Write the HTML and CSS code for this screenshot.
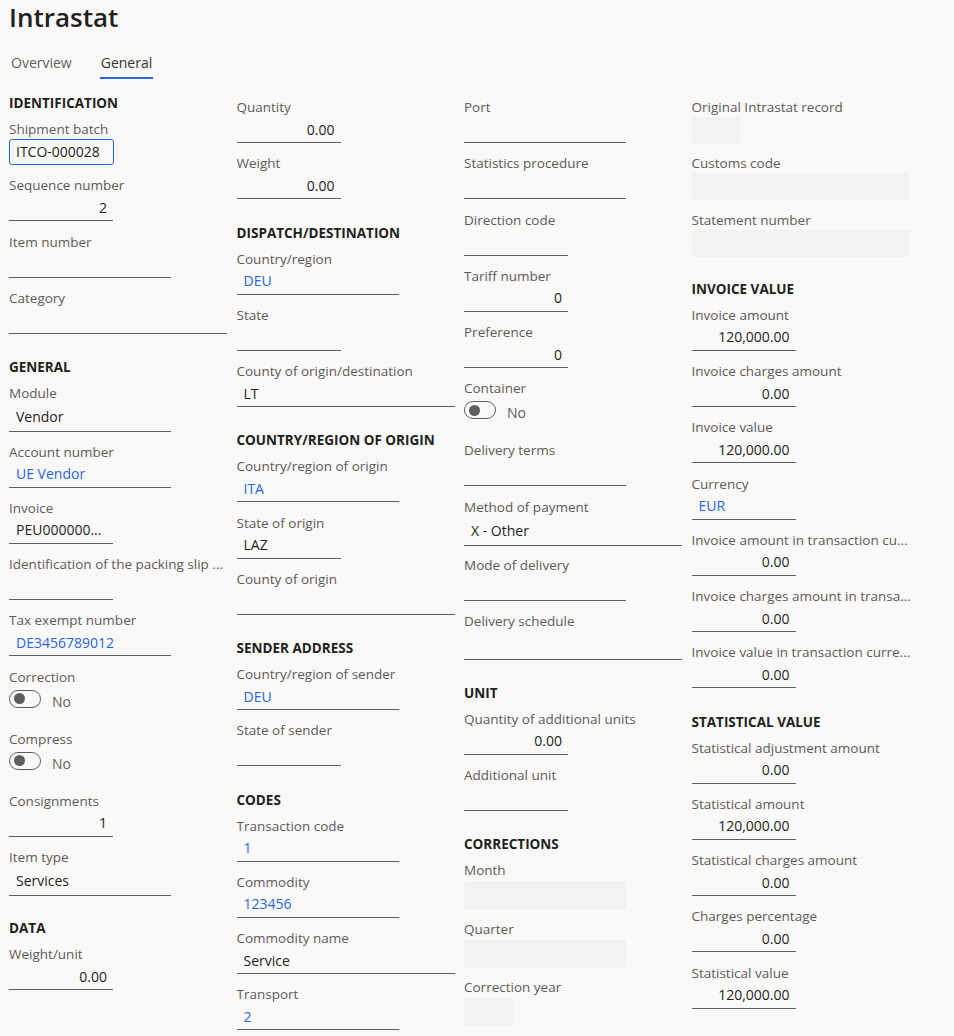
FILE: index.html
```html
<!DOCTYPE html>
<html lang="en">
<head>
<meta charset="utf-8">
<title>Intrastat</title>
<link rel="stylesheet" href="styles.css">
</head>
<body>
<div class="page">
  <h1 class="title">Intrastat</h1>
  <div class="tabs">
    <span class="tab">Overview</span>
    <span class="tab active">General</span>
  </div>
  <div class="form">
    <!-- Column 1 -->
    <div class="col">
      <div class="heading">IDENTIFICATION</div>
      <div class="field"><div class="lbl">Shipment batch</div><div class="ctl input">ITCO-000028</div></div>
      <div class="field"><div class="lbl">Sequence number</div><div class="ctl xs num">2</div></div>
      <div class="field"><div class="lbl">Item number</div><div class="ctl sm"></div></div>
      <div class="field"><div class="lbl">Category</div><div class="ctl md"></div></div>
      <div class="heading">GENERAL</div>
      <div class="field combo"><div class="lbl">Module</div><div class="ctl sm">Vendor</div></div>
      <div class="field"><div class="lbl">Account number</div><div class="ctl sm link">UE Vendor</div></div>
      <div class="field"><div class="lbl">Invoice</div><div class="ctl xs">PEU000000...</div></div>
      <div class="field"><div class="lbl">Identification of the packing slip ...</div><div class="ctl xs"></div></div>
      <div class="field"><div class="lbl">Tax exempt number</div><div class="ctl sm link">DE3456789012</div></div>
      <div class="field tog"><div class="lbl">Correction</div><div class="togrow"><span class="toggle"><span class="knob"></span></span><span class="no">No</span></div></div>
      <div class="field tog"><div class="lbl">Compress</div><div class="togrow"><span class="toggle"><span class="knob"></span></span><span class="no">No</span></div></div>
      <div class="field"><div class="lbl">Consignments</div><div class="ctl xs num">1</div></div>
      <div class="field combo"><div class="lbl">Item type</div><div class="ctl sm">Services</div></div>
      <div class="heading">DATA</div>
      <div class="field"><div class="lbl">Weight/unit</div><div class="ctl xs num">0.00</div></div>
    </div>

    <!-- Column 2 -->
    <div class="col top">
      <div class="field"><div class="lbl">Quantity</div><div class="ctl xs num">0.00</div></div>
      <div class="field"><div class="lbl">Weight</div><div class="ctl xs num">0.00</div></div>
      <div class="heading">DISPATCH/DESTINATION</div>
      <div class="field"><div class="lbl">Country/region</div><div class="ctl sm link">DEU</div></div>
      <div class="field"><div class="lbl">State</div><div class="ctl xs"></div></div>
      <div class="field"><div class="lbl">County of origin/destination</div><div class="ctl md">LT</div></div>
      <div class="heading">COUNTRY/REGION OF ORIGIN</div>
      <div class="field"><div class="lbl">Country/region of origin</div><div class="ctl sm link">ITA</div></div>
      <div class="field"><div class="lbl">State of origin</div><div class="ctl xs">LAZ</div></div>
      <div class="field"><div class="lbl">County of origin</div><div class="ctl md"></div></div>
      <div class="heading">SENDER ADDRESS</div>
      <div class="field"><div class="lbl">Country/region of sender</div><div class="ctl sm link">DEU</div></div>
      <div class="field"><div class="lbl">State of sender</div><div class="ctl xs"></div></div>
      <div class="heading">CODES</div>
      <div class="field"><div class="lbl">Transaction code</div><div class="ctl sm link">1</div></div>
      <div class="field"><div class="lbl">Commodity</div><div class="ctl sm link">123456</div></div>
      <div class="field"><div class="lbl">Commodity name</div><div class="ctl md">Service</div></div>
      <div class="field"><div class="lbl">Transport</div><div class="ctl sm link">2</div></div>
    </div>

    <!-- Column 3 -->
    <div class="col top">
      <div class="field"><div class="lbl">Port</div><div class="ctl sm"></div></div>
      <div class="field"><div class="lbl">Statistics procedure</div><div class="ctl sm"></div></div>
      <div class="field"><div class="lbl">Direction code</div><div class="ctl xs"></div></div>
      <div class="field"><div class="lbl">Tariff number</div><div class="ctl xs num">0</div></div>
      <div class="field"><div class="lbl">Preference</div><div class="ctl xs num">0</div></div>
      <div class="field tog"><div class="lbl">Container</div><div class="togrow"><span class="toggle"><span class="knob"></span></span><span class="no">No</span></div></div>
      <div class="field"><div class="lbl">Delivery terms</div><div class="ctl sm"></div></div>
      <div class="field combo"><div class="lbl">Method of payment</div><div class="ctl md">X - Other</div></div>
      <div class="field"><div class="lbl">Mode of delivery</div><div class="ctl sm"></div></div>
      <div class="field combo"><div class="lbl">Delivery schedule</div><div class="ctl md"></div></div>
      <div class="heading">UNIT</div>
      <div class="field"><div class="lbl">Quantity of additional units</div><div class="ctl xs num">0.00</div></div>
      <div class="field"><div class="lbl">Additional unit</div><div class="ctl xs"></div></div>
      <div class="heading">CORRECTIONS</div>
      <div class="field combo"><div class="lbl">Month</div><div class="ctl sm disabled"></div></div>
      <div class="field combo"><div class="lbl">Quarter</div><div class="ctl sm disabled"></div></div>
      <div class="field combo"><div class="lbl">Correction year</div><div class="ctl w49 disabled"></div></div>
    </div>

    <!-- Column 4 -->
    <div class="col top">
      <div class="field"><div class="lbl">Original Intrastat record</div><div class="ctl w48 disabled"></div></div>
      <div class="field"><div class="lbl">Customs code</div><div class="ctl md disabled"></div></div>
      <div class="field"><div class="lbl">Statement number</div><div class="ctl md disabled"></div></div>
      <div class="heading">INVOICE VALUE</div>
      <div class="field"><div class="lbl">Invoice amount</div><div class="ctl xs num">120,000.00</div></div>
      <div class="field"><div class="lbl">Invoice charges amount</div><div class="ctl xs num">0.00</div></div>
      <div class="field"><div class="lbl">Invoice value</div><div class="ctl xs num">120,000.00</div></div>
      <div class="field"><div class="lbl">Currency</div><div class="ctl xs link">EUR</div></div>
      <div class="field"><div class="lbl">Invoice amount in transaction cu...</div><div class="ctl xs num">0.00</div></div>
      <div class="field"><div class="lbl">Invoice charges amount in transa...</div><div class="ctl xs num">0.00</div></div>
      <div class="field"><div class="lbl">Invoice value in transaction curre...</div><div class="ctl xs num">0.00</div></div>
      <div class="heading">STATISTICAL VALUE</div>
      <div class="field"><div class="lbl">Statistical adjustment amount</div><div class="ctl xs num">0.00</div></div>
      <div class="field"><div class="lbl">Statistical amount</div><div class="ctl xs num">120,000.00</div></div>
      <div class="field"><div class="lbl">Statistical charges amount</div><div class="ctl xs num">0.00</div></div>
      <div class="field"><div class="lbl">Charges percentage</div><div class="ctl xs num">0.00</div></div>
      <div class="field"><div class="lbl">Statistical value</div><div class="ctl xs num">120,000.00</div></div>
    </div>
  </div>
</div>
</body>
</html>
```

FILE: styles.css
```css
* { box-sizing: border-box; }
html, body { margin: 0; padding: 0; }
body {
  background: #faf9f8;
  font-family: "Segoe UI", "Open Sans", "Noto Sans", sans-serif;
  color: #201f1e;
}
.page {
  width: 954px;
  height: 1036px;
  padding-left: 9px;
  overflow: hidden;
}
.title {
  margin: 0;
  font-size: 26px;
  font-weight: 600;
  line-height: 34px;
  color: #201f1e;
}
.tabs {
  display: flex;
  align-items: flex-end;
  gap: 27px;
  height: 46px;
  padding: 0 0 1px 1px;
}
.tab {
  font-size: 14px;
  line-height: 20px;
  padding: 0 1px 4px;
  border-bottom: 2px solid transparent;
  color: #605e5c;
}
.tab.active {
  color: #323130;
  border-bottom-color: #2266e3;
}
.form {
  display: grid;
  grid-template-columns: repeat(4, 227.5px);
  align-items: start;
}
.col { padding-top: 0; }
.col.top { padding-top: 17px; }
.heading {
  font-size: 13.5px;
  font-weight: 700;
  line-height: 20px;
  padding: 13px 0 6px;
  color: #201f1e;
  white-space: nowrap;
}
.field { height: 56.25px; }
.field.combo { height: 58.5px; }
.field.tog { height: 62px; }
.lbl {
  font-size: 13.5px;
  line-height: 20px;
  color: #5c5a58;
  white-space: nowrap;
  overflow: hidden;
  max-width: 220px;
}
.ctl {
  height: 26px;
  border-bottom: 1px solid #605e5c;
  font-size: 14px;
  line-height: 20px;
  padding: 0 7px;
  display: flex;
  align-items: center;
  white-space: nowrap;
  overflow: hidden;
  color: #201f1e;
}
.combo .ctl { height: 29px; }
.xs { width: 104px; }
.sm { width: 162px; }
.md { width: 218px; }
.w48 { width: 48px; }
.w49 { width: 49px; }
.num { justify-content: flex-end; padding-right: 6px; }
.link { color: #2266e3; }
.input {
  width: 105px;
  border: 1px solid #2266e3;
  border-radius: 3px;
  padding-left: 6px;
}
.disabled {
  background: #f3f2f1;
  border: none;
  border-radius: 2px;
  height: 27px;
}
.combo .disabled { height: 28px; margin-top: 1px; }
.togrow {
  display: flex;
  align-items: flex-start;
  gap: 11px;
}
.toggle {
  margin-top: 3px;
  width: 32px;
  height: 18px;
  border: 1px solid #605e5c;
  border-radius: 9px;
  display: flex;
  align-items: center;
  padding-left: 4px;
}
.knob {
  width: 11px;
  height: 11px;
  border-radius: 50%;
  background: #605e5c;
}
.no {
  margin-top: 5px;
  font-size: 14px;
  line-height: 20px;
  color: #605e5c;
}
```
